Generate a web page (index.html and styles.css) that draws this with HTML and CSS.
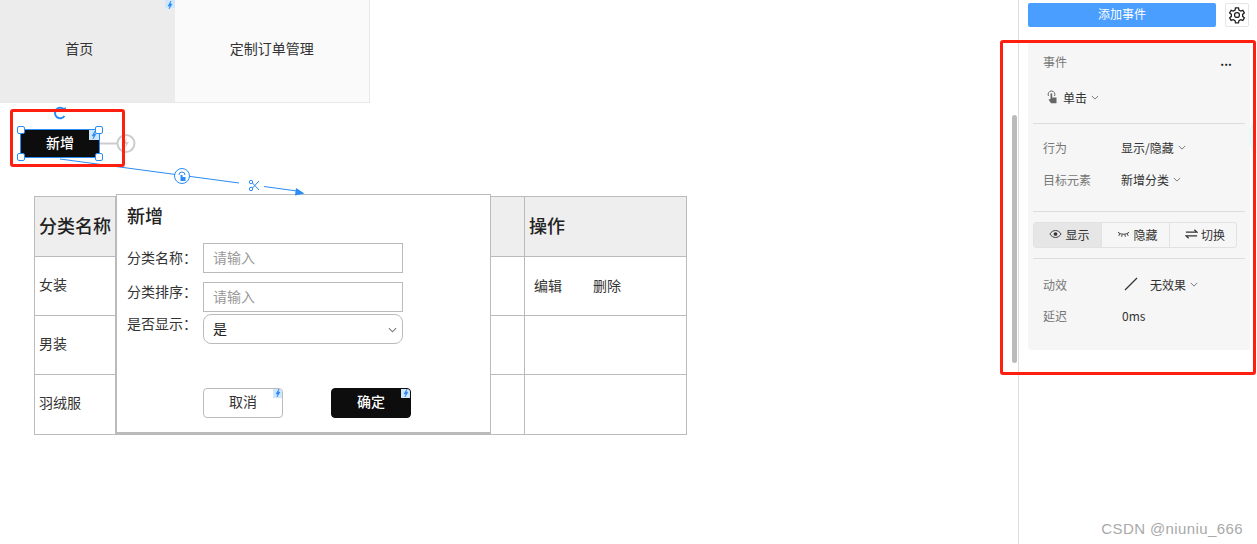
FILE: index.html
```html
<!DOCTYPE html>
<html lang="zh-CN">
<head>
  <meta charset="UTF-8">
  <title>事件</title>
  <link rel="stylesheet" href="styles.css">
</head>
<body>

  <!-- Canvas -->
  <div class="canvas">
    <div class="nav-tabs">
      <div class="nav-tab active">首页<span class="bolt-tag"><svg viewBox="0 0 10 10"><path d="M6 1 3 6h2L4 9l3-5H5z"/></svg></span></div>
      <div class="nav-tab">定制订单管理</div>
    </div>

    <div class="data-table">
      <div class="cell head">分类名称</div>
      <div class="cell head"></div>
      <div class="cell head">操作</div>
      <div class="cell">女装</div>
      <div class="cell"></div>
      <div class="cell actions"><span>编辑</span><span>删除</span></div>
      <div class="cell">男装</div>
      <div class="cell"></div>
      <div class="cell"></div>
      <div class="cell">羽绒服</div>
      <div class="cell"></div>
      <div class="cell"></div>
    </div>

    <!-- Dialog -->
    <div class="dialog">
      <h2 class="dialog-title">新增</h2>
      <div class="form-row">
        <label class="form-label">分类名称：</label>
        <div class="form-input">请输入</div>
      </div>
      <div class="form-row raised">
        <label class="form-label">分类排序：</label>
        <div class="form-input">请输入</div>
      </div>
      <div class="form-row raised tight">
        <label class="form-label">是否显示：</label>
        <div class="form-select">是
          <svg class="select-arrow" viewBox="0 0 10 6"><path d="M1 1l4 4 4-4"/></svg>
        </div>
      </div>
      <div class="dialog-buttons">
        <div class="dlg-btn">取消<span class="bolt-tag"><svg viewBox="0 0 10 10"><path d="M6 1 3 6h2L4 9l3-5H5z"/></svg></span></div>
        <div class="dlg-btn dark">确定<span class="bolt-tag"><svg viewBox="0 0 10 10"><path d="M6 1 3 6h2L4 9l3-5H5z"/></svg></span></div>
      </div>
    </div>

    <!-- Selected widget and its link line -->
    <svg class="rotate-icon" viewBox="0 0 14 14"><path d="M11 3.500A5.200 5.200 0 1 0 11.500 10"/><path class="fill" d="M8.500 3.600 12.800 1l.2 4.600z"/></svg>
    <div class="selected-btn">新增
      <span class="bolt-tag"><svg viewBox="0 0 10 10"><path d="M6 1 3 6h2L4 9l3-5H5z"/></svg></span>
      <i class="handle tl"></i><i class="handle tr"></i><i class="handle bl"></i><i class="handle br"></i>
    </div>
    <svg class="link-layer" viewBox="0 0 400 220">
      <path class="gray" d="M100 143.500h17"/>
      <circle class="gray" cx="126" cy="143.500" r="8.500"/>
      <path class="gray-fill" d="M127 138l-4 6h3l-1 4 4-6h-3z"/>
      <path class="blue" d="M60 159 239 183"/>
      <path class="blue" d="M264 186.500 297 191"/>
      <path class="blue-fill" d="M296 188l8.500 5.500-9.500 2z"/>
      <circle class="blue white" cx="182" cy="176" r="7.500"/>
      <path class="blue-fill" d="M180.500 175h2v2h3v4h-5z"/>
      <path class="blue" d="M179 175a3 3 0 1 1 6 0"/>
      <circle class="blue" cx="251" cy="189" r="1.700"/>
      <circle class="blue" cx="251" cy="182" r="1.700"/>
      <path class="blue" d="M252.500 188 259 181M252.500 183l6.500 7"/>
    </svg>

    <div class="red-box canvas-box"></div>
  </div>

  <!-- Right panel -->
  <div class="side">
    <div class="side-top">
      <div class="add-event">添加事件</div>
      <div class="gear-btn">
        <svg viewBox="0 0 24 24"><path d="M10 2.500h4l.6 3 2.300 1.300 2.900-1 2 3.400-2.300 2v2.600l2.300 2-2 3.400-2.900-1-2.300 1.300-.6 3h-4l-.6-3-2.300-1.300-2.900 1-2-3.400 2.300-2v-2.600l-2.300-2 2-3.400 2.900 1 2.300-1.300z"/><circle cx="12" cy="12" r="3.300"/></svg>
      </div>
    </div>

    <div class="scroll-thumb"></div>

    <div class="event-card">
      <div class="card-head">
        <span class="muted">事件</span>
        <span class="more">...</span>
      </div>
      <div class="trigger">
        <svg class="hand" viewBox="0 0 12 14"><path class="ring" d="M2.500 6a3.400 3.400 0 1 1 6 0"/><path d="M4.500 3.500h1.700v3.900h4.300v5.900h-5.500L2.500 9.500l2-.5z"/></svg>
        <span>单击</span>
        <svg class="caret" viewBox="0 0 10 6"><path d="M1 1l4 4 4-4"/></svg>
      </div>
      <div class="rule"></div>
      <div class="prop first">
        <span class="muted prop-name">行为</span>
        <span>显示/隐藏</span>
        <svg class="caret" viewBox="0 0 10 6"><path d="M1 1l4 4 4-4"/></svg>
      </div>
      <div class="prop">
        <span class="muted prop-name">目标元素</span>
        <span>新增分类</span>
        <svg class="caret" viewBox="0 0 10 6"><path d="M1 1l4 4 4-4"/></svg>
      </div>
      <div class="rule low"></div>
      <div class="seg">
        <div class="seg-item on">
          <svg viewBox="0 0 14 10"><path d="M1 5c3-5 9-5 12 0-3 5-9 5-12 0z"/><circle class="dot" cx="7" cy="5" r="2"/></svg>显示
        </div>
        <div class="seg-item">
          <svg viewBox="0 0 14 10"><path d="M1 3c3 3 9 3 12 0M3 4.500 2 7M5.500 5.500 5 8M8.500 5.500 9 8M11 4.500 12 7"/></svg>隐藏
        </div>
        <div class="seg-item">
          <svg viewBox="0 0 14 10"><path class="swap" d="M1 3h12L10 .5M13 7H1l3 2.500"/></svg>切换
        </div>
      </div>
      <div class="rule tight"></div>
      <div class="prop effect">
        <span class="muted prop-name">动效</span>
        <svg class="slash" viewBox="0 0 14 14"><path d="M1 13 13 1"/></svg>
        <span>无效果</span>
        <svg class="caret" viewBox="0 0 10 6"><path d="M1 1l4 4 4-4"/></svg>
      </div>
      <div class="prop delay">
        <span class="muted prop-name">延迟</span>
        <span>0ms</span>
      </div>
    </div>

    <div class="edge-glow"></div>
    <div class="red-box side-box"></div>
  </div>

  <div class="watermark">CSDN @niuniu_666</div>

</body>
</html>
```

FILE: styles.css
```css
* {
  margin: 0;
  padding: 0;
  box-sizing: border-box;
}

html, body {
  height: 544px;
  overflow: hidden;
}

body {
  display: flex;
  background: #fff;
  font-family: "Noto Sans CJK SC", "Liberation Sans", sans-serif;
  font-size: 14px;
  color: #333;
}

/* Canvas */
.canvas {
  position: relative;
  width: 1018px;
  height: 544px;
  flex: none;
}

.nav-tabs {
  display: flex;
  width: 370px;
  height: 103px;
  border-right: 1px solid #e8e8e8;
  border-bottom: 1px solid #e8e8e8;
}

.nav-tab {
  position: relative;
  display: flex;
  align-items: center;
  justify-content: center;
  width: 195px;
  padding-bottom: 6px;
  background: #fafafa;
}

.nav-tab.active {
  width: 175px;
  padding-right: 16px;
  background: #ececec;
}

.bolt-tag {
  position: absolute;
  top: 0;
  right: 0;
  width: 10px;
  height: 10px;
  background: #cfe6fb;
}

.bolt-tag svg {
  display: block;
  width: 10px;
  height: 10px;
  fill: #2a8cf5;
  stroke: #2a8cf5;
  stroke-width: 0.6;
}

.nav-tab .bolt-tag {
  height: 8px;
}

.data-table {
  position: absolute;
  left: 34px;
  top: 196px;
  width: 653px;
  height: 239px;
  display: grid;
  grid-template-columns: 81px 409px 1fr;
  grid-template-rows: 60px 59px 59px 1fr;
  border-top: 1px solid #bbb;
  border-left: 1px solid #bbb;
}

.cell {
  display: flex;
  align-items: center;
  padding: 0 0 5px 4px;
  border-right: 1px solid #bbb;
  border-bottom: 1px solid #bbb;
}

.cell.head {
  padding-bottom: 4px;
  background: #eee;
  font-size: 18px;
  font-weight: 500;
  color: #222;
}

.cell.actions {
  gap: 31px;
  padding: 0 0 3px 9px;
}

/* Dialog */
.dialog {
  position: absolute;
  left: 116px;
  top: 194px;
  width: 375px;
  height: 240px;
  padding: 11px 10px 0;
  background: #fff;
  border: 1px solid #bbb;
  border-bottom-width: 2px;
}

.dialog-title {
  height: 24px;
  margin-bottom: 13px;
  font-size: 18px;
  line-height: 18px;
  font-weight: 500;
  color: #222;
}

.form-row {
  display: flex;
  gap: 6px;
  margin-bottom: 9px;
}

.form-row.raised .form-label {
  margin-top: -5px;
}

.form-row.tight {
  margin-top: -7px;
  margin-bottom: 0;
}

.form-label {
  width: 70px;
  line-height: 28px;
  white-space: nowrap;
}

.form-input,
.form-select {
  position: relative;
  width: 200px;
  height: 30px;
  padding-left: 9px;
  line-height: 26px;
  border: 1px solid #bbb;
}

.form-input {
  color: #999;
}

.form-select {
  border-radius: 8px;
  color: #222;
}

.select-arrow {
  position: absolute;
  right: 5px;
  top: 12px;
  width: 9px;
  height: 6px;
}

.select-arrow path,
.caret path {
  fill: none;
  stroke: #777;
  stroke-width: 1.200;
}

.dialog-buttons {
  display: flex;
  gap: 48px;
  margin: 44px 0 0 76px;
}

.dlg-btn {
  position: relative;
  display: flex;
  align-items: center;
  justify-content: center;
  width: 80px;
  height: 30px;
  padding-bottom: 4px;
  border: 1px solid #bbb;
  border-radius: 4px;
  overflow: hidden;
}

.dlg-btn .bolt-tag {
  top: -1px;
  right: -1px;
}

.dlg-btn.dark {
  background: #0d0d0d;
  border-color: #0d0d0d;
  color: #fff;
  font-weight: 500;
}

/* Selected widget */
.selected-btn {
  position: absolute;
  left: 20px;
  top: 129px;
  width: 80px;
  height: 29px;
  padding-bottom: 4px;
  display: flex;
  align-items: center;
  justify-content: center;
  background: #0d0d0d;
  border: 1px solid #2a8cf5;
  color: #fff;
  font-weight: 500;
}

.handle {
  position: absolute;
  width: 8px;
  height: 8px;
  background: #fff;
  border: 1px solid #2a8cf5;
  border-radius: 2px;
}

.handle.tl { left: -4px; top: -4px; }
.handle.tr { right: -4px; top: -4px; }
.handle.bl { left: -4px; bottom: -4px; }
.handle.br { right: -4px; bottom: -4px; }

.rotate-icon {
  position: absolute;
  left: 53px;
  top: 106px;
  width: 14px;
  height: 14px;
}

.rotate-icon path {
  fill: none;
  stroke: #2a8cf5;
  stroke-width: 2;
}

.rotate-icon path.fill {
  fill: #2a8cf5;
  stroke: none;
}

.link-layer {
  position: absolute;
  left: 0;
  top: 0;
  width: 400px;
  height: 220px;
}

.link-layer .gray {
  fill: none;
  stroke: #ccc;
  stroke-width: 2;
}

.link-layer .gray-fill {
  fill: #ccc;
}

.link-layer .blue {
  fill: none;
  stroke: #2a8cf5;
  stroke-width: 1;
}

.link-layer .blue.white {
  fill: #fff;
}

.link-layer .blue-fill {
  fill: #2a8cf5;
}

.red-box {
  position: absolute;
  border: 3px solid #ff1f10;
  border-radius: 3px;
}

.canvas-box {
  left: 10px;
  top: 109px;
  width: 115px;
  height: 58px;
}

/* Right panel */
.side {
  position: relative;
  flex: 1;
  border-left: 1px solid #ddd;
}

.side-top {
  display: flex;
  align-items: center;
  gap: 9px;
  padding: 3px 0 0 9px;
}

.add-event {
  width: 188px;
  height: 24px;
  background: #4a9eff;
  border-radius: 2px;
  color: #fff;
  text-align: center;
  line-height: 22px;
  font-size: 12px;
}

.gear-btn {
  width: 24px;
  height: 24px;
  border: 1px solid #e5e5e5;
  border-radius: 2px;
  padding: 2px;
}

.gear-btn svg {
  display: block;
  width: 18px;
  height: 18px;
  fill: none;
  stroke: #222;
  stroke-width: 1.700;
}

.scroll-thumb {
  position: absolute;
  left: -7px;
  top: 115px;
  width: 5px;
  height: 248px;
  background: #bbb;
  border-radius: 3px;
}

.event-card {
  width: 222px;
  height: 310px;
  margin: 13px 0 0 9px;
  padding-top: 1px;
  background: #f6f6f6;
  border-radius: 0 0 3px 3px;
  font-size: 12px;
  color: #333;
}

.muted {
  color: #777;
}

.card-head {
  display: flex;
  justify-content: space-between;
  padding: 11px 18px 0 15px;
  height: 32px;
  line-height: 20px;
}

.more {
  color: #222;
  font-weight: 700;
  line-height: 14px;
  padding-top: 2px;
}

.trigger {
  display: flex;
  align-items: center;
  height: 20px;
  margin-top: 15px;
  padding-left: 18px;
  padding-bottom: 2px;
}

.hand {
  width: 12px;
  height: 14px;
  margin-right: 5px;
}

.hand path {
  fill: #666;
}

.hand path.ring {
  fill: none;
  stroke: #666;
  stroke-width: 1;
}

.caret {
  width: 8px;
  height: 5px;
  margin-left: 4px;
}

.rule {
  height: 1px;
  margin: 15px 5px 0;
  background: #ddd;
}

.prop {
  display: flex;
  align-items: center;
  height: 20px;
  padding-left: 15px;
  padding-bottom: 2px;
}

.prop.first {
  margin-top: 14px;
}

.prop + .prop {
  margin-top: 12px;
}

.prop-name {
  width: 78px;
}

.rule.low {
  margin-top: 21px;
}

.seg {
  display: flex;
  width: 204px;
  height: 26px;
  margin: 10px 0 0 5px;
  border: 1px solid #e2e2e2;
  border-radius: 3px;
}

.seg-item {
  flex: none;
  width: 68px;
  display: flex;
  align-items: center;
  justify-content: center;
  gap: 3px;
  padding: 0 0 2px 4px;
  border-right: 1px solid #e2e2e2;
}

.seg-item:last-child {
  flex: 1;
  border-right: none;
}

.seg-item.on {
  background: #e6e6e6;
}

.seg-item svg {
  width: 13px;
  height: 10px;
  fill: none;
  stroke: #333;
  stroke-width: 1;
}

.seg-item svg .swap {
  stroke-width: 1.300;
}

.seg-item svg .dot {
  fill: #333;
  stroke: none;
}

.rule.tight {
  margin-top: 10px;
}

.prop.effect {
  margin-top: 16px;
}

.slash {
  width: 14px;
  height: 14px;
  margin-right: 12px;
  fill: none;
  stroke: #333;
  stroke-width: 1.200;
}

.prop.effect .prop-name {
  width: 81px;
}

.prop.delay {
  margin-top: 11px;
}

.prop.delay .prop-name {
  width: 79px;
}

.edge-glow {
  position: absolute;
  right: 0;
  top: 120px;
  width: 8px;
  height: 33px;
  background: #e2fbfb;
  border-radius: 8px 0 0 8px / 16px 0 0 16px;
}

.side-box {
  left: -19px;
  top: 40px;
  width: 256px;
  height: 335px;
}

.watermark {
  position: absolute;
  right: 14px;
  bottom: 7px;
  font-family: "Liberation Sans", sans-serif;
  font-size: 15px;
  letter-spacing: 0.4px;
  color: #a9a9a9;
}
```
